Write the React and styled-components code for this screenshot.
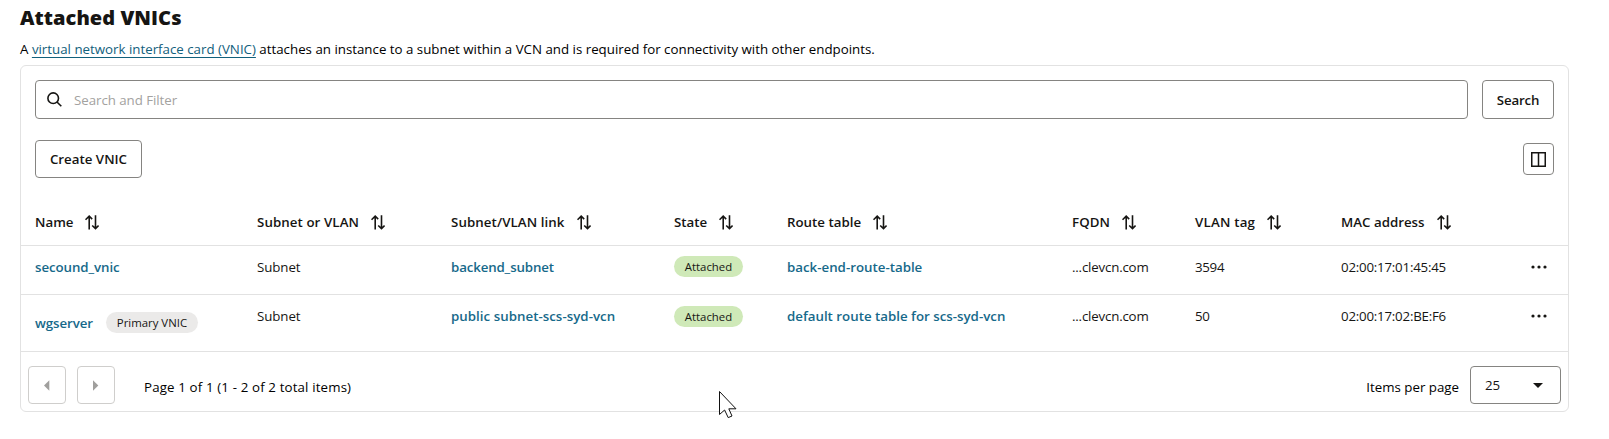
import React from "react";
import styled, { createGlobalStyle } from "styled-components";

const Global = createGlobalStyle`
  *, *::before, *::after { box-sizing: border-box; }
  body {
    margin: 0;
    background: #fff;
    color: #161513;
    font-family: "Open Sans", "Noto Sans", sans-serif;
    font-size: 13.3px;
    line-height: 20px;
    overflow: hidden;
  }
  button, input { font: inherit; color: inherit; }
`;

const Page = styled.main`
  position: relative;
  height: 439px;
  padding: 6px 40px 0 20px;
`;

const Title = styled.h1`
  margin: 0;
  font-size: 20px;
  font-weight: 800;
  line-height: 24px;
  letter-spacing: 0.05px;
`;

const Intro = styled.p`
  margin: 9px 0 6px;
  color: #000;
  white-space: nowrap;
`;

const DocLink = styled.a`
  color: #11607c;
  text-decoration: underline;
  text-decoration-thickness: 1px;
  text-underline-offset: 3px;
  text-decoration-skip-ink: none;
`;

const Panel = styled.section`
  width: 1549px;
  height: 347px;
  border: 1px solid #e2e2e2;
  border-radius: 6px;
`;

const SearchBar = styled.div`
  display: flex;
  gap: 14px;
  padding: 14px 14px 0;
`;

const SearchField = styled.label`
  flex: 1;
  display: flex;
  align-items: center;
  gap: 12px;
  height: 39px;
  padding: 0 11px;
  border: 1px solid #858481;
  border-radius: 4px;
`;

const SearchInput = styled.input`
  flex: 1;
  border: 0;
  padding: 0;
  outline: 0;
  background: none;
  letter-spacing: -0.05px;
  &::placeholder { color: #a3a2a0; opacity: 1; }
`;

const Button = styled.button`
  width: ${(p) => p.$w}px;
  height: ${(p) => p.$h}px;
  display: flex;
  align-items: center;
  justify-content: center;
  padding: 0;
  background: #fff;
  border: 1px solid ${(p) => (p.$muted ? "#cfcecc" : "#858481")};
  border-radius: 4px;
  font-weight: 600;
  letter-spacing: ${(p) => p.$tracking || 0}px;
`;

const Toolbar = styled.div`
  display: flex;
  align-items: center;
  justify-content: space-between;
  padding: 21px 14px 0;
`;

const Row = styled.div`
  display: grid;
  grid-template-columns: 222px 194px 223px 113px 285px 123px 146px 190px 1fr;
  align-items: start;
  height: ${(p) => p.$h}px;
  padding: ${(p) => p.$top}px 14px 0;
  border-bottom: 1px solid #e2e2e2;
  white-space: nowrap;
`;

const HeadCell = styled.div`
  display: flex;
  align-items: center;
  gap: 12px;
  font-weight: 600;
  letter-spacing: ${(p) => p.$tracking || 0}px;
`;

const Cell = styled.div`
  display: flex;
  align-items: center;
  letter-spacing: ${(p) => p.$tracking || 0}px;
`;

const NameCell = styled(Cell)`
  gap: 13px;
  padding-top: ${(p) => (p.$tagged ? 7 : 0)}px;
`;

const ResourceLink = styled.a`
  color: #16698a;
  font-weight: 600;
  letter-spacing: ${(p) => p.$tracking || 0}px;
`;

const Badge = styled.span`
  width: ${(p) => p.$w}px;
  height: 21px;
  margin-top: ${(p) => p.$shift || 0}px;
  border-radius: 11px;
  background: ${(p) => (p.$tone === "green" ? "#cfe9b8" : "#ebeae9")};
  font-size: 11.4px;
  line-height: 21px;
  text-align: center;
`;

const Footer = styled.div`
  display: flex;
  align-items: flex-start;
  padding: 14px 7px 0;
  color: #000;
`;

const Pager = styled.div`
  display: flex;
  gap: 11px;
`;

const PageInfo = styled.span`
  margin: 11px auto 0 29px;
  letter-spacing: 0.14px;
`;

const PerPage = styled.span`
  margin: 11px 11px 0 0;
`;

const Select = styled.div`
  width: 91px;
  height: 38px;
  display: flex;
  align-items: center;
  justify-content: space-between;
  padding: 0 17px 0 14px;
  border: 1px solid #858481;
  border-radius: 4px;
  color: #161513;
  letter-spacing: -0.2px;
`;

const Pointer = styled.svg`
  position: absolute;
  left: 718px;
  top: 390px;
`;

const SearchIcon = () => (
  <svg width="15" height="15" viewBox="0 0 15 15" fill="none" stroke="#161513" strokeWidth="1.6">
    <circle cx="6.2" cy="6.2" r="5.3" />
    <path d="M10 10l4.3 4.3" />
  </svg>
);

const SortIcon = () => (
  <svg width="14" height="15" viewBox="0 0 14 15" fill="none" stroke="#161513" strokeWidth="1.6">
    <path d="M0.5 4.8L4.2 1.2L7.2 4.1M4.2 1.2V14.5M10.5 0.3V13.4M7.2 10.5L10.5 13.6L13.6 10.5" />
  </svg>
);

const ColumnsIcon = () => (
  <svg width="15" height="15" viewBox="0 0 15 15" fill="none" stroke="#161513" strokeWidth="1.5">
    <path d="M0.75 0.75h13.5v13.5H0.75zM7.5 0.75v13.5" />
  </svg>
);

const DotsIcon = () => (
  <svg width="16" height="20" viewBox="0 0 16 20" fill="#161513">
    <circle cx="2" cy="10" r="1.6" />
    <circle cx="8" cy="10" r="1.6" />
    <circle cx="14" cy="10" r="1.6" />
  </svg>
);

const Arrow = ({ next }) => (
  <svg width="6" height="11" viewBox="0 0 6 11" fill="#a09f9d">
    <path d={next ? "M0 0.3L5.3 5.5L0 10.7z" : "M5.3 0.3L0 5.5L5.3 10.7z"} />
  </svg>
);

const columns = [
  ["Name"],
  ["Subnet or VLAN", 0.08],
  ["Subnet/VLAN link", 0.08],
  ["State"],
  ["Route table"],
  ["FQDN", 0.1],
  ["VLAN tag", 0.2],
  ["MAC address"],
];

const vnics = [
  { name: "secound_vnic", subnet: "backend_subnet", subnetTracking: -0.14, route: "back-end-route-table", tag: "3594", mac: "02:00:17:01:45:45", h: 49, badgeShift: -1 },
  { name: "wgserver", primary: true, subnet: "public subnet-scs-syd-vcn", subnetTracking: 0.03, route: "default route table for scs-syd-vcn", tag: "50", mac: "02:00:17:02:BE:F6", h: 57, badgeShift: 0 },
];

export default function App() {
  return (
    <Page>
      <Global />
      <Title>Attached VNICs</Title>
      <Intro>
        A <DocLink>virtual network interface card (VNIC)</DocLink> attaches an instance to a subnet within a VCN and is
        required for connectivity with other endpoints.
      </Intro>
      <Panel>
        <SearchBar>
          <SearchField>
            <SearchIcon />
            <SearchInput placeholder="Search and Filter" />
          </SearchField>
          <Button $w={72} $h={39} $tracking={-0.2}>Search</Button>
        </SearchBar>
        <Toolbar>
          <Button $w={107} $h={38}>Create VNIC</Button>
          <Button $w={31} $h={32} aria-label="Columns"><ColumnsIcon /></Button>
        </Toolbar>
        <Row $h={68} $top={34}>
          {columns.map(([label, tracking]) => (
            <HeadCell key={label} $tracking={tracking}>{label}<SortIcon /></HeadCell>
          ))}
        </Row>
        {vnics.map((v) => (
          <Row key={v.name} $h={v.h} $top={11}>
            <NameCell $tagged={v.primary}>
              <ResourceLink $tracking={-0.08}>{v.name}</ResourceLink>
              {v.primary && <Badge $w={92} $shift={-1}>Primary VNIC</Badge>}
            </NameCell>
            <Cell $tracking={-0.07}>Subnet</Cell>
            <Cell><ResourceLink $tracking={v.subnetTracking}>{v.subnet}</ResourceLink></Cell>
            <Cell><Badge $w={69} $tone="green" $shift={v.badgeShift}>Attached</Badge></Cell>
            <Cell><ResourceLink>{v.route}</ResourceLink></Cell>
            <Cell $tracking={-0.19}>...clevcn.com</Cell>
            <Cell $tracking={-0.3}>{v.tag}</Cell>
            <Cell $tracking={-0.22}>{v.mac}</Cell>
            <Cell><DotsIcon /></Cell>
          </Row>
        ))}
        <Footer>
          <Pager>
            <Button $w={38} $h={38} $muted aria-label="Previous page"><Arrow /></Button>
            <Button $w={38} $h={38} $muted aria-label="Next page"><Arrow next /></Button>
          </Pager>
          <PageInfo>Page 1 of 1 (1 - 2 of 2 total items)</PageInfo>
          <PerPage>Items per page</PerPage>
          <Select>
            25
            <svg width="10" height="5" viewBox="0 0 10 5" fill="#161513"><path d="M0 0h10L5 5z" /></svg>
          </Select>
        </Footer>
      </Panel>
      <Pointer width="20" height="29" viewBox="0 0 20 29" fill="#fff" stroke="#111" strokeWidth="1">
        <path d="M1.5 1.5V24.5L6.6 20L10.2 27.6L14 26L10.8 18.8H18z" />
      </Pointer>
    </Page>
  );
}
